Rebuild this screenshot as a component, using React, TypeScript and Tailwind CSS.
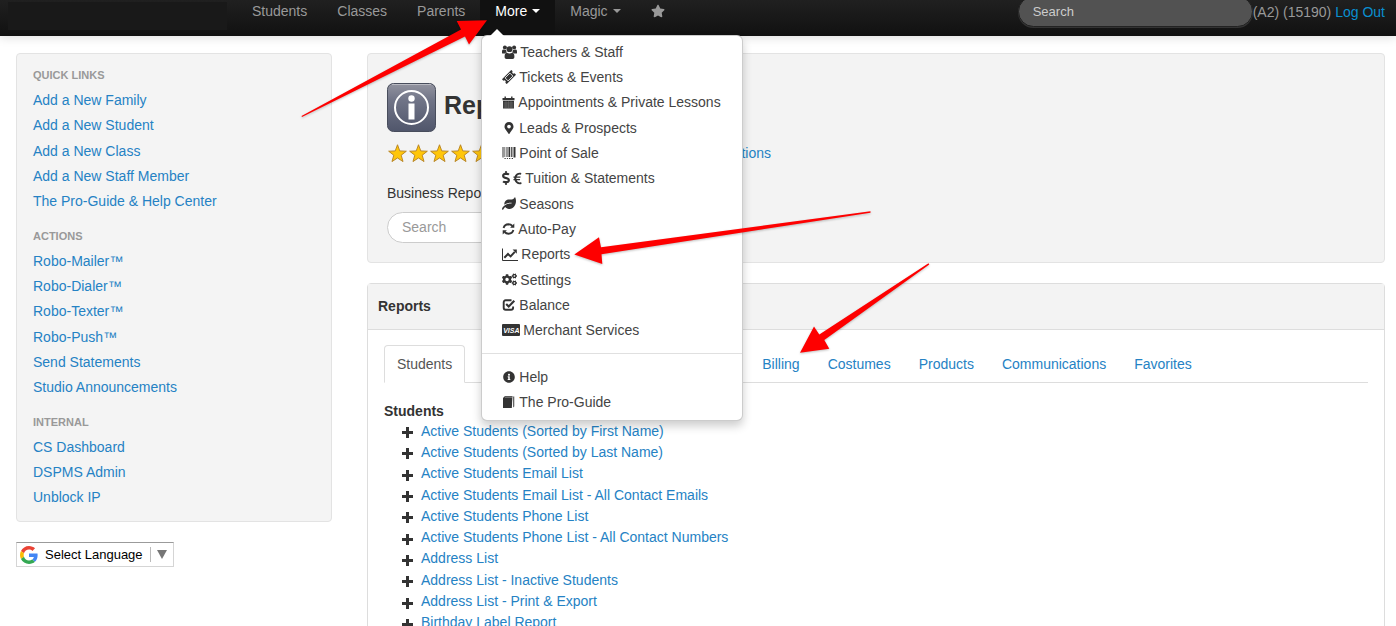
import type { ReactNode } from "react";
import {
  FaMapMarkerAlt,
  FaDollarSign,
  FaEuroSign,
  FaLeaf,
  FaCogs,
  FaInfoCircle,
  FaStar,
} from "react-icons/fa";

const GroupIcon = () => (
  <svg className="h-[14px] w-[15px]" viewBox="0 0 15 14" fill="currentColor">
    <circle cx="2.9" cy="2.4" r="2" />
    <circle cx="12.1" cy="2.4" r="2" />
    <circle cx="7.5" cy="4.2" r="2.9" />
    <path d="M0 8V6.6Q0 4.4 1.4 4.6q1.6.8 2.7.2Q4 6.4 5 7.4 3.600 7.500 2.900 8.500H1Q0 8.500 0 8z" />
    <path d="M15 8V6.600Q15 4.400 13.600 4.600q-1.600.800-2.700.200Q11 6.400 10 7.400 11.400 7.500 12.100 8.500H14Q15 8.500 15 8z" />
    <path d="M2.600 12.200Q2.500 8 4.800 7.800 7.500 9.400 10.200 7.800q2.300.200 2.200 4.400 0 1.800-1.800 1.800H4.400q-1.800 0-1.800-1.800z" />
  </svg>
);

const TicketIcon = () => (
  <svg className="size-[14px]" viewBox="0 0 14 14">
    <g transform="rotate(-45 7 7)">
      <path
        d="M.4 3.600h13.200v2q-1.400.2-1.400 1.400t1.400 1.400v2H.4v-2Q1.800 8.200 1.800 7T.4 5.600z"
        fill="currentColor"
      />
      <rect x="3.600" y="4.900" width="6.800" height="4.200" fill="none" stroke="#fff" strokeWidth=".8" />
    </g>
  </svg>
);

const CalendarIcon = () => (
  <svg className="h-[13px] w-[13px]" viewBox="0 0 13 13" fill="currentColor">
    <path d="M.5 2h12v2.200H.5zM2.500.6h1.400V3H2.500zM9.100.6h1.400V3H9.100z" />
    <path d="M1 4.800h11V12.500H1z" />
    <path d="M1.500 7h10M1.500 9h10M1.500 11h10" stroke="#999" strokeWidth=".5" />
    <path d="M4 5v7.200M6.500 5v7.200M9 5v7.200" stroke="#777" strokeWidth=".4" />
  </svg>
);

const BarcodeIcon = () => (
  <svg className="h-3 w-[14px]" viewBox="0 0 14 12" fill="currentColor">
    <path d="M.500 0h1v10.500h-1zM2.500 0h.7v10h-.7zM4.500 0h1v10h-1zM6.500 0h1.700v10H6.500zM9.200 0h1.200v10H9.200zM11.500 0h2v10.500h-2zM2.500 11h1.200v1H2.500zM4.900 11h1v1h-1zM7.100 11h1.200v1H7.100zM9.700 11h1.300v1H9.700z" />
  </svg>
);

const RefreshIcon = () => (
  <svg className="h-3 w-[13px]" viewBox="0 0 13 12" fill="none" stroke="currentColor" strokeWidth="1.900">
    <path d="M1.600 5Q2.500 1.500 6.500 1.300 8.800 1.300 10.400 3" />
    <path d="M11.400 7Q10.500 10.500 6.500 10.700 4.200 10.700 2.600 9" />
    <path d="M12.300.6v4.200H8.100zM.700 11.400V7.200h4.200z" fill="currentColor" stroke="none" />
  </svg>
);

const ChartIcon = () => (
  <svg className="h-[13px] w-4" viewBox="0 0 16 13" fill="none" stroke="currentColor">
    <path d="M.5.5v12H16" strokeWidth="1" />
    <path d="M2.300 9.800 6 6l2.600 2.400 4.200-4.600" strokeWidth="2" />
    <path d="M10.600 1.600h4.200v4.200z" fill="currentColor" stroke="none" />
  </svg>
);

const CheckIcon = () => (
  <svg className="h-3 w-[14px]" viewBox="0 0 14 12" fill="none" stroke="currentColor">
    <path d="M9.500 1.300H3.700Q1.700 1.300 1.700 3.300v5.400q0 2 2 2h5.400q2 0 2-2V7.400" strokeWidth="1.900" />
    <path d="m4.200 5 2.500 2.600 5.600-5.800" strokeWidth="2.100" />
  </svg>
);

const VisaIcon = () => (
  <span className="flex h-3 w-[18px] items-center justify-center rounded-[1px] bg-[#333] text-[7px] leading-none font-bold text-white italic">
    VISA
  </span>
);

const BookIcon = () => (
  <svg className="h-3 w-[14px]" viewBox="0 0 14 12" fill="currentColor">
    <path d="M3 0h7.500L9.800 12H1V2z" />
    <path d="M11 .6h1.300v9.800L11 11.600z" opacity=".75" />
    <path d="M2.800 1.100h7.400" stroke="#fff" strokeWidth=".5" />
  </svg>
);

const PlusIcon = () => (
  <svg className="mt-1 size-[11px] shrink-0" viewBox="0 0 11 11" fill="#333">
    <path d="M4 0h3v4h4v3H7v4H4V7H0V4h4z" />
  </svg>
);

const InfoBadge = () => (
  <svg className="size-[49px] shrink-0" viewBox="0 0 49 49">
    <defs>
      <linearGradient id="badge" x1="0" y1="0" x2="0" y2="1">
        <stop offset="0" stopColor="#92939f" />
        <stop offset=".35" stopColor="#707487" />
        <stop offset="1" stopColor="#50566b" />
      </linearGradient>
    </defs>
    <rect x=".5" y=".5" width="48" height="48" rx="6" fill="url(#badge)" stroke="#484d5c" />
    <path d="M5 1.5h39" stroke="#b9bac2" />
    <circle cx="24.5" cy="24.5" r="16.5" fill="none" stroke="#fff" strokeWidth="2" />
    <circle cx="24.5" cy="15.5" r="3.2" fill="#fff" />
    <rect x="21.5" y="20.5" width="6" height="16" fill="#fff" />
  </svg>
);

const GoldStar = () => (
  <svg className="size-[19px]" viewBox="0 0 20 20">
    <path
      d="M10 .8l2.400 6.500 6.900.3-5.400 4.200 1.900 6.700-5.800-3.800-5.800 3.800 1.900-6.700L.7 7.600l6.900-.3z"
      fill="#ffc60a"
      stroke="#b78423"
      strokeWidth="1"
    />
  </svg>
);

const GoogleG = () => (
  <svg className="size-[18px]" viewBox="0 0 48 48">
    <path fill="#EA4335" d="M24 9.5c3.54 0 6.71 1.22 9.21 3.6l6.85-6.85C35.9 2.38 30.47 0 24 0 14.62 0 6.51 5.38 2.56 13.22l7.98 6.19C12.43 13.72 17.74 9.5 24 9.5z" />
    <path fill="#4285F4" d="M46.98 24.55c0-1.57-.15-3.09-.38-4.55H24v9.02h12.94c-.58 2.96-2.26 5.48-4.78 7.18l7.73 6c4.51-4.18 7.09-10.36 7.09-17.65z" />
    <path fill="#FBBC05" d="M10.53 28.59c-.48-1.45-.76-2.99-.76-4.59s.27-3.14.76-4.59l-7.98-6.19C.92 16.46 0 20.12 0 24c0 3.88.92 7.54 2.56 10.78l7.97-6.19z" />
    <path fill="#34A853" d="M24 48c6.48 0 11.93-2.13 15.89-5.81l-7.73-6c-2.15 1.45-4.92 2.3-8.16 2.3-6.26 0-11.57-4.22-13.47-9.91l-7.98 6.19C6.51 42.62 14.62 48 24 48z" />
  </svg>
);

const Caret = () => (
  <svg className="ml-[5px] h-1 w-2" viewBox="0 0 8 4" fill="currentColor">
    <path d="M0 0h8L4 4z" />
  </svg>
);

type MenuEntry = { label: string; icon: ReactNode };

const menuItems: MenuEntry[] = [
  { label: "Teachers & Staff", icon: <GroupIcon /> },
  { label: "Tickets & Events", icon: <TicketIcon /> },
  { label: "Appointments & Private Lessons", icon: <CalendarIcon /> },
  { label: "Leads & Prospects", icon: <FaMapMarkerAlt className="h-3 w-[14px]" /> },
  { label: "Point of Sale", icon: <BarcodeIcon /> },
  {
    label: "Tuition & Statements",
    icon: (
      <>
        <FaDollarSign className="h-[14px] w-2" />
        <FaEuroSign className="ml-[3px] h-[13px] w-[9px]" />
      </>
    ),
  },
  { label: "Seasons", icon: <FaLeaf className="h-[13px] w-[14px]" /> },
  { label: "Auto-Pay", icon: <RefreshIcon /> },
  { label: "Reports", icon: <ChartIcon /> },
  { label: "Settings", icon: <FaCogs className="h-[15px] w-[15px]" /> },
  { label: "Balance", icon: <CheckIcon /> },
  { label: "Merchant Services", icon: <VisaIcon /> },
];

const helpItems: MenuEntry[] = [
  { label: "Help", icon: <FaInfoCircle className="h-3 w-[14px]" /> },
  { label: "The Pro-Guide", icon: <BookIcon /> },
];

const MenuRow = ({ label, icon }: MenuEntry) => (
  <li className="flex flex-1 items-center">
    <a href="#" className="flex items-center gap-[3px] px-5 whitespace-nowrap text-[#444]">
      <span className="flex items-center text-[#333]">{icon}</span>
      {label}
    </a>
  </li>
);

const MoreMenu = () => (
  <div className="absolute top-[35px] left-px z-20 w-[262px] rounded-md border border-black/20 bg-white pt-[3px] pb-[5px] shadow-[0_5px_10px_rgba(0,0,0,0.2)]">
    <svg className="absolute -top-[7px] left-2 h-[7px] w-[14px]" viewBox="0 0 14 7" fill="#fff">
      <path d="M7 0l7 7H0z" />
    </svg>
    <ul className="flex h-[304px] flex-col">
      {menuItems.map((m) => (
        <MenuRow key={m.label} {...m} />
      ))}
    </ul>
    <hr className="mt-[10px] mb-[10px] border-[#e0e0e0]" />
    <ul className="flex h-[51px] flex-col">
      {helpItems.map((m) => (
        <MenuRow key={m.label} {...m} />
      ))}
    </ul>
  </div>
);

const SideGroup = ({ title, links, listClass }: { title: string; links: string[]; listClass: string }) => (
  <section>
    <h2 className="text-[11px] leading-[18px] font-bold text-[#999] uppercase">{title}</h2>
    <ul className={listClass}>
      {links.map((l) => (
        <li key={l} className="flex flex-1 items-center">
          <a href="#" className="text-[#2582c4]">
            {l}
          </a>
        </li>
      ))}
    </ul>
  </section>
);

const reports = [
  "Active Students (Sorted by First Name)",
  "Active Students (Sorted by Last Name)",
  "Active Students Email List",
  "Active Students Email List - All Contact Emails",
  "Active Students Phone List",
  "Active Students Phone List - All Contact Numbers",
  "Address List",
  "Address List - Inactive Students",
  "Address List - Print & Export",
  "Birthday Label Report",
];

const tabs = ["Billing", "Costumes", "Products", "Communications", "Favorites"];

const Header = () => (
  <header className="relative z-10 flex h-9 items-start bg-linear-to-b from-[#202020] to-[#111] text-[#999] shadow-[0_1px_10px_rgba(0,0,0,0.15)]">
    <div className="mt-0.5 ml-2 h-7 w-[219px] bg-[#191919]" />
    <nav className="ml-[10px] flex">
      {["Students", "Classes", "Parents"].map((l) => (
        <a key={l} href="#" className="px-[15px] pt-px leading-5">
          {l}
        </a>
      ))}
      <div className="relative">
        <button type="button" className="flex h-[35px] items-start bg-[#111] px-[15px] pt-px text-white">
          <span className="flex items-center leading-5">
            More
            <Caret />
          </span>
        </button>
        <MoreMenu />
      </div>
      <button type="button" className="flex items-start px-[15px] pt-px">
        <span className="flex items-center leading-5">
          Magic
          <Caret />
        </span>
      </button>
      <a href="#" aria-label="Favorites" className="flex h-[22px] items-center px-[15px]">
        <FaStar className="size-[14px]" />
      </a>
    </nav>
    <div className="ml-auto flex items-start pr-[11px]">
      <input
        type="text"
        aria-label="Search"
        placeholder="Search"
        className="-mt-1 h-[31px] w-[235px] rounded-full border border-[#222] bg-[#525252] px-[14px] text-[13px] text-white shadow-[0_1px_0_#333] placeholder:text-[#ccc]"
      />
      <p className="pt-0.5 leading-5 whitespace-nowrap">
        (A2) (15190){" "}
        <a href="#" className="text-[#0a8fd0]">
          Log Out
        </a>
      </p>
    </div>
  </header>
);

const Sidebar = () => (
  <aside className="w-[316px] shrink-0">
    <div className="flex flex-col gap-[13px] rounded border border-[#e3e3e3] bg-[#f4f4f4] px-4 pt-3 pb-[11px]">
      <SideGroup
        title="Quick Links"
        listClass="mt-[3px] flex h-[127px] flex-col"
        links={[
          "Add a New Family",
          "Add a New Student",
          "Add a New Class",
          "Add a New Staff Member",
          "The Pro-Guide & Help Center",
        ]}
      />
      <SideGroup
        title="Actions"
        listClass="mt-[3px] flex h-[152px] flex-col"
        links={[
          "Robo-Mailer™",
          "Robo-Dialer™",
          "Robo-Texter™",
          "Robo-Push™",
          "Send Statements",
          "Studio Announcements",
        ]}
      />
      <SideGroup
        title="Internal"
        listClass="mt-[3px] flex h-[76px] flex-col"
        links={["CS Dashboard", "DSPMS Admin", "Unblock IP"]}
      />
    </div>
    <button
      type="button"
      className="mt-5 flex h-[25px] w-[158px] items-center border border-[#d5d5d5] border-t-[#9b9b9b] bg-white pl-[3px] text-[13px] text-black"
    >
      <GoogleG />
      <span className="ml-[7px] whitespace-nowrap">Select Language</span>
      <span className="ml-auto flex h-[15px] w-[23px] items-center justify-center border-l border-[#bbb] text-[#767676]">
        <svg className="h-[9px] w-[10px]" viewBox="0 0 10 9" fill="currentColor">
          <path d="M0 0h10L5 9z" />
        </svg>
      </span>
    </button>
  </aside>
);

const Hero = () => (
  <section className="rounded border border-[#e3e3e3] bg-[#f3f3f3] px-[19px] pt-[29px] pb-[19px]">
    <div className="flex items-center gap-2">
      <InfoBadge />
      <h1 className="pb-[5px] text-[25px] leading-10 font-bold text-[#333]">Reports</h1>
    </div>
    <div className="mt-[11px] flex h-5 items-center">
      <div className="flex gap-0.5 pl-px">
        {[1, 2, 3, 4, 5].map((n) => (
          <GoldStar key={n} />
        ))}
      </div>
      <a href="#" className="ml-[203px] text-[#2582c4]">
        Suggestions
      </a>
    </div>
    <p className="mt-5 leading-5">Business Reports</p>
    <input
      type="text"
      aria-label="Search reports"
      placeholder="Search"
      className="mt-[9px] h-[31px] w-[220px] rounded-full border border-[#ccc] bg-white px-[14px] pb-0.5 placeholder:text-[#999]"
    />
  </section>
);

const ReportPanel = () => (
  <section className="mt-5 rounded-t border border-[#ddd] bg-white">
    <h2 className="border-b border-[#ddd] bg-[#f3f3f3] px-[10px] py-3 leading-[21px] font-bold">Reports</h2>
    <div className="px-4 pt-[15px]">
      <nav className="flex border-b border-[#ddd]">
        <a
          href="#"
          className="-mb-px rounded-t border border-[#ddd] border-b-white bg-white px-3 py-2 leading-5 text-[#555]"
        >
          Students
        </a>
        <div className="ml-[284px] flex gap-0.5">
          {tabs.map((t) => (
            <a key={t} href="#" className="px-[13px] pt-[9px] pb-[7px] leading-5 text-[#2582c4]">
              {t}
            </a>
          ))}
        </div>
      </nav>
      <h3 className="mt-[19px] leading-[18px] font-bold">Students</h3>
      <ul className="flex h-[213px] flex-col pl-[18px]">
        {reports.map((r) => (
          <li key={r} className="flex flex-1 items-center gap-2">
            <PlusIcon />
            <a href="#" className="whitespace-nowrap text-[#2582c4]">
              {r}
            </a>
          </li>
        ))}
      </ul>
    </div>
  </section>
);

const Arrows = () => (
  <svg
    className="pointer-events-none absolute top-0 left-0 z-30 h-[626px] w-[1396px] drop-shadow-[0_1px_1px_rgba(0,0,0,0.25)]"
    viewBox="0 0 1396 626"
    fill="#fe0000"
  >
    <path d="M301.5 116 461 29.5 456.7 21 487 20.3 469 44.5 465 36.5 302 117z" />
    <path d="M870.5 211.3 601 247.3 599 237.3 574.3 254.5 602.3 264 601.5 254.3 870.5 212.7z" />
    <path d="M928.5 263.3 819.3 334.5 814 326.5 800 352.7 829.3 348.7 824.3 340 929.3 264.5z" />
  </svg>
);

export default function App() {
  return (
    <div className="relative h-screen overflow-hidden bg-white font-['Liberation_Sans',Arial,sans-serif] text-[14px] leading-5 text-[#333]">
      <Header />
      <div className="flex gap-[35px] pt-[17px] pr-[11px] pl-4">
        <Sidebar />
        <main className="min-w-0 flex-1">
          <Hero />
          <ReportPanel />
        </main>
      </div>
      <Arrows />
    </div>
  );
}
